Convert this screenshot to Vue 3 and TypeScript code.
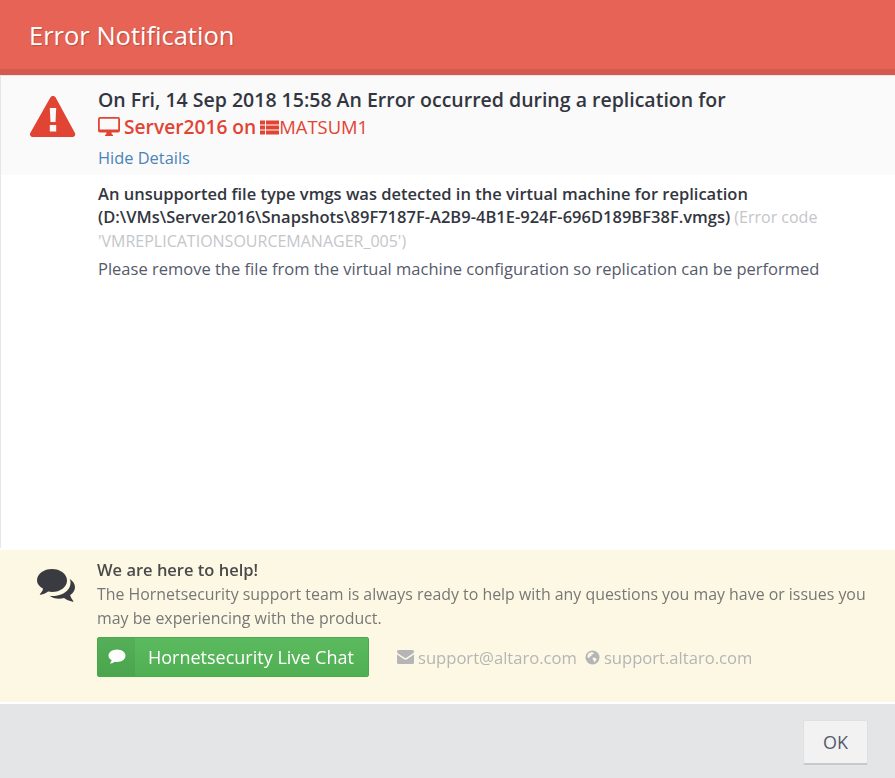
<script setup lang="ts">
const title = 'Error Notification'
</script>

<template>
  <div class="dialog">
    <header class="head">{{ title }}</header>
    <div class="content">
      <section class="summary">
        <svg class="warn" viewBox="0 0 46 42" width="46" height="42">
          <path fill-rule="evenodd" fill="#e24434" d="M23 1c1.200 0 2.200.7 2.800 1.700l19 35c.6 1 .6 2.100 0 3-.6.9-1.500 1.300-2.600 1.300H3c-1.100 0-2-.4-2.600-1.300-.6-.9-.6-2 0-3l19.800-35C20.800 1.700 21.800 1 23 1zM19.800 13l.7 14h5l.7-14h-6.400zM19.800 30v6.500h6.400V30h-6.400z"/>
        </svg>
        <div class="summary-text">
          <div class="line-dark">On Fri, 14 Sep 2018 15:58 An Error occurred during a replication for</div>
          <div class="line-red">
            <svg class="ic-desktop" viewBox="0 0 22 20" width="22" height="20">
              <path fill="#e24434" fill-rule="evenodd" d="M2 0h18a2 2 0 0 1 2 2v11.500a2 2 0 0 1-2 2h-6.500c0 1.500.5 2 1.500 2.500v1H7v-1c1-.5 1.500-1 1.500-2.500H2a2 2 0 0 1-2-2V2a2 2 0 0 1 2-2zM1.800 1.800v10.700h18.400V1.800H1.800z"/>
            </svg>
            <span>Server2016 on</span>
            <svg class="ic-list" viewBox="0 0 19 15" width="19" height="15">
              <path fill="#e24434" d="M0 .5h5v4H0zM6 .5h13v4H6zM0 5.500h5v4H0zM6 5.500h13v4H6zM0 10.500h5v4H0zM6 10.500h13v4H6z"/>
            </svg>
            <span class="host">MATSUM1</span>
          </div>
          <a class="hide">Hide Details</a>
        </div>
      </section>
      <section class="details">
        <p class="err">
          <strong>An unsupported file type vmgs was detected in the virtual machine for replication (D:\VMs\Server2016\Snapshots\89F7187F-A2B9-4B1E-924F-696D189BF38F.vmgs)</strong>
          <span class="code"> (Error code 'VMREPLICATIONSOURCEMANAGER_005')</span>
        </p>
        <p class="fix">Please remove the file from the virtual machine configuration so replication can be performed</p>
      </section>
    </div>
    <section class="help">
      <svg class="ic-comments" viewBox="0 0 38 33" width="38" height="33">
        <path fill="#3a3b40" d="M15 0c8.300 0 15 4.900 15 11.500S23.300 23 15 23c-1.300 0-2.600-.1-3.800-.4C9.200 24 6.800 25.200 3.500 25.800c-.6.1-.9-.5-.5-.9 1.500-1.500 2.600-3 3.100-5.100C2.400 17.700 0 14.800 0 11.500 0 4.900 6.700 0 15 0z"/>
        <path fill="#3a3b40" d="M32.500 9.800c3.300 2 5.500 5 5.500 8.400 0 3.100-1.800 5.800-4.800 7.800.5 2.300 1.700 4.300 3.100 5.900.4.400.1 1-.5.900-3.600-.6-6.500-2-8.700-3.700-1.700.4-3.400.6-5.100.6-3.800 0-7-1-9.500-2.900 1 .1 2 .2 3 .2C26.600 27 35 20.300 33.300 11.500c-.2-.6-.5-1.200-.8-1.700z"/>
      </svg>
      <div class="help-body">
        <div class="help-title">We are here to help!</div>
        <div class="help-text">The Hornetsecurity support team is always ready to help with any questions you may have or issues you may be experiencing with the product.</div>
        <div class="help-actions">
          <button class="chat">
            <span class="chat-icon">
              <svg viewBox="0 0 18 16" width="18" height="16">
                <path fill="#fff" d="M9 0.500c4.700 0 8.500 2.800 8.500 6.300S13.700 13 9 13c-.8 0-1.500-.1-2.200-.2-1.300.9-2.700 1.500-4.300 1.800-.4 0-.6-.3-.4-.6.7-.8 1.300-1.700 1.600-2.800C1.700 10 .5 8.500.5 6.800.5 3.300 4.300.5 9 .5z"/>
              </svg>
            </span>
            <span class="chat-label">Hornetsecurity Live Chat</span>
          </button>
          <span class="contact contact-mail">
            <svg viewBox="0 0 17 14" width="17" height="14">
              <path fill="#b5b5b5" d="M1.500 0h14A1.500 1.500 0 0 1 17 1.500c0 .8-.5 1.500-1.100 1.900L9.500 7.800c-.6.400-1.400.4-2 0L1.100 3.400C.5 3 0 2.300 0 1.500A1.500 1.500 0 0 1 1.500 0zM0 4.500l7 4.700c.9.600 2.100.6 3 0l7-4.700v8A1.500 1.500 0 0 1 15.500 14h-14A1.500 1.500 0 0 1 0 12.500z"/>
            </svg>
            support@altaro.com
          </span>
          <span class="contact">
            <svg viewBox="0 0 15 15" width="15" height="15">
              <circle cx="7.500" cy="7.500" r="7" fill="#b5b5b5"/>
              <path fill="#fdf8e4" d="M5 2.500c1.500-.6 3-.4 4 .2l-.8 1.500-1.500.3-.3 1.500-1.500.5-.7 1.500c-1 0-1.700-.6-1.900-1.500C2.500 4.600 3.500 3.200 5 2.500zM8 7.500l2.600.4 1 1.200-1 2-1.400 1.400-.5-2L7.500 9z"/>
            </svg>
            support.altaro.com
          </span>
        </div>
      </div>
    </section>
    <footer class="foot">
      <button class="ok">OK</button>
    </footer>
  </div>
</template>

<style scoped>
.dialog {
  width: 895px;
  height: 778px;
  display: flex;
  flex-direction: column;
  background: #fff;
  font-family: "Open Sans", "Noto Sans", sans-serif;
  overflow: hidden;
}
.head {
  height: 69px;
  box-sizing: content-box;
  flex: none;
  background: #e76355;
  border-bottom: 6px solid #d45a4d;
  padding-left: 29px;
  color: #fff;
  font-size: 25.5px;
  line-height: 71px;
  text-shadow: 1px 1px 1px rgba(0, 0, 0, 0.2);
}
.content {
  flex: 1;
  min-height: 0;
  border-left: 1px solid #e6e6e6;
  border-top: 1px solid #e6e6e6;
}
.summary {
  height: 99px;
  box-sizing: border-box;
  background: #fafafa;
  display: flex;
  padding: 11px 0 0 29px;
}
.warn {
  margin-top: 8px;
  flex: none;
}
.summary-text {
  margin-left: 22px;
}
.line-dark {
  font-size: 19.5px;
  font-weight: 600;
  line-height: 26px;
  color: #333640;
}
.line-red {
  display: flex;
  align-items: center;
  margin-top: 1px;
  font-size: 19.2px;
  font-weight: 600;
  line-height: 26px;
  color: #e24434;
}
.host {
  font-size: 18.4px;
  font-weight: 400;
}
.ic-desktop {
  margin-right: 4px;
}
.ic-list {
  margin-left: 4px;
  margin-right: 0;
}
.hide {
  display: block;
  margin-top: 7px;
  font-size: 16.4px;
  line-height: 22px;
  color: #4a85b8;
}
.details {
  padding: 7px 40px 0 97px;
}
.err {
  margin: 0;
  font-size: 16.5px;
  line-height: 23px;
}
.err strong {
  font-weight: 600;
  color: #333640;
}
.code {
  font-size: 16px;
  color: #c4c6ca;
}
.fix {
  margin: 4px 0 0;
  font-size: 16.5px;
  line-height: 23px;
  color: #555a6b;
}
.help {
  height: 152px;
  flex: none;
  margin-top: 2px;
  box-sizing: border-box;
  background: #fdf8e4;
  display: flex;
  padding: 9px 0 0 37px;
}
.ic-comments {
  flex: none;
  margin-top: 10px;
  filter: blur(0.4px);
}
.help-body {
  margin-left: 22px;
  width: 775px;
  filter: blur(0.35px);
}
.help-title {
  font-size: 16.5px;
  font-weight: 600;
  line-height: 22px;
  color: #4a4a4a;
}
.help-text {
  margin-top: 1px;
  font-size: 15.9px;
  line-height: 24px;
  color: #777;
}
.help-actions {
  display: flex;
  align-items: center;
  margin-top: 7px;
}
.chat {
  display: flex;
  align-items: stretch;
  width: 272px;
  height: 40px;
  padding: 0;
  border: 1px solid #48ab4b;
  border-radius: 2px;
  background: linear-gradient(#5cb95f, #4fb052);
  color: #fff;
  font-family: inherit;
  cursor: pointer;
}
.chat-icon {
  width: 37px;
  flex: none;
  display: flex;
  align-items: center;
  justify-content: center;
  background: rgba(0, 0, 0, 0.06);
}
.chat-label {
  margin-left: 13px;
  font-size: 18px;
  line-height: 38px;
}
.contact {
  display: inline-flex;
  align-items: center;
  gap: 4px;
  font-size: 16.6px;
  color: #b5b5b5;
}
.contact-mail {
  margin-left: 28px;
  margin-right: 8px;
}
.foot {
  height: 74px;
  flex: none;
  margin-top: 2px;
  background: #e4e5e7;
  display: flex;
  justify-content: flex-end;
  padding: 16px 27px 0 0;
  box-sizing: border-box;
}
.ok {
  width: 65px;
  height: 45px;
  border: 1px solid #e0e0e0;
  border-bottom: 2px solid #c8c9cb;
  border-radius: 2px;
  background: #f2f2f2;
  color: #555a6b;
  font-family: inherit;
  font-size: 18px;
  cursor: pointer;
}
</style>
